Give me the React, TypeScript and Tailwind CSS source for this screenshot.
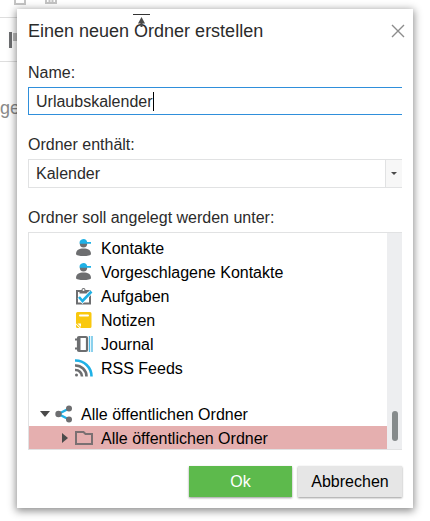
import { useState, ReactNode } from 'react'

interface Folder {
  id: string
  label: string
  icon: ReactNode
}

function ContactIcon() {
  return (
    <svg width="18" height="18" viewBox="0 0 18 18" aria-hidden="true">
      <circle cx="8.5" cy="4.7" r="3.7" fill="#6d6e70" />
      <path d="M4.8 4.7a3.7 3.7 0 0 1 7.2-1.8h4v1.8z" fill="#1fb1e6" />
      <path d="M1 15c0-4 3-5.6 7.5-5.6S16 11 16 15c0 2.7-15 2.7-15 0z" fill="#6d6e70" />
    </svg>
  )
}

function TaskIcon() {
  return (
    <svg width="18" height="18" viewBox="0 0 18 18" fill="none" aria-hidden="true">
      <path d="M2 4h13v12.500H2z" stroke="#6d6e70" strokeWidth="2" />
      <path d="M4.500 3h2a2 2 0 0 1 4 0h2v3.500h-8z" fill="#6d6e70" />
      <circle cx="8.500" cy="3" r="1" fill="#fff" />
      <path d="M4 10l3.500 4L16.500 4.500" stroke="#fff" strokeWidth="4" />
      <path d="M4 10l3.500 4L16.500 4.500" stroke="#1fb1e6" strokeWidth="2.600" />
    </svg>
  )
}

function NoteIcon() {
  return (
    <svg width="18" height="18" viewBox="0 0 18 18" aria-hidden="true">
      <path d="M2.500 1h12.500a1.500 1.500 0 0 1 1.500 1.500v13a1.500 1.500 0 0 1-1.500 1.500H6L1 12.500v-10A1.500 1.500 0 0 1 2.500 1z" fill="#f9c80e" />
      <path d="M5 4.500h8" stroke="#fff" strokeWidth="2" strokeLinecap="round" />
      <path d="M2.500 12.500H6V16z" fill="#fff" />
      <path d="M1 13.500L4.500 17H2.500A1.500 1.500 0 0 1 1 15.500z" fill="#f9c80e" />
    </svg>
  )
}

function JournalIcon() {
  return (
    <svg width="18" height="18" viewBox="0 0 18 18" fill="none" aria-hidden="true">
      <rect x="3" y="2" width="9" height="14" rx="1" stroke="#6d6e70" strokeWidth="2.200" />
      <path d="M4.500 2v14M0 4.500h3M0 13.500h3" stroke="#6d6e70" strokeWidth="2" />
      <path d="M14.500 1v16M17 1v16" stroke="#4fb9e4" strokeWidth="1.300" />
    </svg>
  )
}

function RssIcon() {
  return (
    <svg width="18" height="18" viewBox="0 0 18 18" fill="none" aria-hidden="true">
      <path d="M0 1.500A16 16 0 0 1 16.500 17.500" stroke="#1fb1e6" strokeWidth="2.600" />
      <path d="M0 6.500A11 11 0 0 1 11.500 17.500M0 11A6.500 6.500 0 0 1 7 17.500" stroke="#6d6e70" strokeWidth="2.600" />
      <circle cx="1.500" cy="16" r="1.500" fill="#6d6e70" />
    </svg>
  )
}

function ShareIcon() {
  return (
    <svg width="18" height="18" viewBox="0 0 18 18" aria-hidden="true">
      <path d="M14 3.500L3.500 9 14 14.500" fill="none" stroke="#1fb1e6" strokeWidth="2.400" />
      <circle cx="3.500" cy="9" r="3.200" fill="#6d6e70" />
      <circle cx="14" cy="3.500" r="3" fill="#6d6e70" />
      <circle cx="14" cy="14.500" r="3" fill="#6d6e70" />
    </svg>
  )
}

function FolderIcon() {
  return (
    <svg width="18" height="18" viewBox="0 0 18 18" fill="none" aria-hidden="true">
      <path d="M1 15V3h7.500L10.500 5H17v10z" stroke="#7a7072" strokeWidth="2" />
    </svg>
  )
}

const folders: Folder[] = [
  { id: 'contacts', label: 'Kontakte', icon: <ContactIcon /> },
  { id: 'suggested', label: 'Vorgeschlagene Kontakte', icon: <ContactIcon /> },
  { id: 'tasks', label: 'Aufgaben', icon: <TaskIcon /> },
  { id: 'notes', label: 'Notizen', icon: <NoteIcon /> },
  { id: 'journal', label: 'Journal', icon: <JournalIcon /> },
  { id: 'rss', label: 'RSS Feeds', icon: <RssIcon /> },
]

function MailPane() {
  return (
    <div className="absolute inset-x-0 top-0 w-1/2" aria-hidden="true">
      <div className="flex h-[18px] gap-[19px] border-b border-[#dedede] pl-[14px]">
        <svg width="12" height="5" viewBox="0 0 12 5" fill="none" stroke="#c4c4c4" strokeWidth="2">
          <path d="M1 0v4h10V0" />
        </svg>
        <svg width="12" height="4" viewBox="0 0 12 4" fill="none" stroke="#c4c4c4" strokeWidth="2">
          <path d="M1 0v3h10V0M4.500 0v3M7.500 0v3" />
        </svg>
      </div>
      <div className="flex h-11 items-center border-b border-[#dedede] pl-[9px]">
        <svg width="14" height="16" viewBox="0 0 14 16">
          <path d="M0 0h3v16H0z" fill="#6d6e70" />
          <path d="M4 1h10v8H4z" fill="#b9b9b9" />
        </svg>
      </div>
      <p className="pt-[34px] text-[18px] leading-6 text-[#8a8a8a]">gelesen</p>
    </div>
  )
}

export default function App() {
  const [name, setName] = useState('Urlaubskalender')
  const [type, setType] = useState('Kalender')
  const [selected, setSelected] = useState('public')

  return (
    <div className="relative min-h-screen bg-white px-[17px] pt-[9px] pb-3 font-['Liberation_Sans',Arial,sans-serif] text-base text-[#2b2b2b]">
      <MailPane />

      <form
        role="dialog"
        aria-labelledby="dialog-title"
        onSubmit={(e) => e.preventDefault()}
        className="relative bg-white px-[11px] pt-[10px] pb-[11px] shadow-[0_2px_8px_1px_rgba(0,0,0,0.45)]"
      >
        {/* drag handle */}
        <svg className="absolute top-[5px] left-[116px]" width="17" height="14" viewBox="0 0 17 14" aria-hidden="true">
          <path d="M0 .5h17" stroke="#333" />
          <path d="M8.500 3l3.500 6.500H5z" fill="#4a4a4a" />
          <path d="M8.500 9v4" stroke="#4a4a4a" strokeWidth="2" />
        </svg>

        <div className="flex h-6 items-center justify-between">
          <h1 id="dialog-title" className="text-[18px] leading-6">Einen neuen Ordner erstellen</h1>
          <button type="button" aria-label="Schließen" className="-mr-[7px] p-1">
            <svg width="14" height="14" viewBox="0 0 14 14" stroke="#8c8c8c" strokeWidth="1.400">
              <path d="M1 1l12 12M13 1L1 13" />
            </svg>
          </button>
        </div>

        <label htmlFor="name" className="mt-[18px] block leading-6">Name:</label>
        <div className="relative mt-[2px]">
          <input
            id="name"
            value={name}
            onChange={(e) => setName(e.target.value)}
            className="block h-7 w-full border border-r-0 border-[#2f8fdb] px-[7px] pt-[2px] caret-transparent outline-none"
          />
          <span className="absolute top-[5px] left-[125px] h-[19px] w-px bg-black" />
        </div>

        <label htmlFor="type" className="mt-[18px] block leading-6">Ordner enthält:</label>
        <div className="relative mt-[2px] flex h-[29px] border border-r-0 border-[#e1e2e3]">
          <select
            id="type"
            value={type}
            onChange={(e) => setType(e.target.value)}
            className="w-full appearance-none bg-transparent px-[7px] outline-none"
          >
            <option>Kalender</option>
            <option>Kontakte</option>
            <option>Aufgaben</option>
          </select>
          <span className="pointer-events-none flex w-[17px] shrink-0 items-center justify-center border-l border-[#e1e2e3] bg-[#f7f7f7]">
            <svg width="6" height="3" viewBox="0 0 6 3">
              <path d="M0 0h6L3 3z" fill="#4a4a4a" />
            </svg>
          </span>
        </div>

        <p id="tree-label" className="mt-[18px] leading-6">Ordner soll angelegt werden unter:</p>
        <div className="mt-[2px] flex border-y border-l border-[#e1e2e3] text-black">
          <ul role="tree" aria-labelledby="tree-label" className="min-w-0 flex-1 pt-[3px]">
            {folders.map((folder) => (
              <li
                key={folder.id}
                role="treeitem"
                aria-selected={selected === folder.id}
                onClick={() => setSelected(folder.id)}
                className="flex h-6 items-center gap-2 pl-[46px]"
              >
                {folder.icon}
                <span className="pt-[2px]">{folder.label}</span>
              </li>
            ))}
            <li role="treeitem" aria-expanded="true" aria-selected="false" className="mt-[22px] flex h-6 items-center pl-[11px]">
              <svg className="mr-[5px]" width="10" height="6" viewBox="0 0 10 6" aria-hidden="true">
                <path d="M0 0h10L5 6z" fill="#4a4a4a" />
              </svg>
              <span className="flex items-center gap-2">
                <ShareIcon />
                <span className="pt-[2px]">Alle öffentlichen Ordner</span>
              </span>
            </li>
            <li
              role="treeitem"
              aria-selected={selected === 'public'}
              onClick={() => setSelected('public')}
              className={`flex h-[23px] items-center pl-[33px] ${selected === 'public' ? 'bg-[#e5afaf]' : ''}`}
            >
              <svg className="mr-[7px]" width="6" height="10" viewBox="0 0 6 10" aria-hidden="true">
                <path d="M0 0v10l6-5z" fill="#4a4a4a" />
              </svg>
              <span className="flex items-center gap-2">
                <FolderIcon />
                <span className="pt-[2px]">Alle öffentlichen Ordner</span>
              </span>
            </li>
          </ul>
          <div className="flex w-[15px] flex-col items-center justify-end bg-[#edeef0] pb-2">
            <div className="h-[30px] w-[6px] rounded-full bg-[#868b8c]" />
          </div>
        </div>

        <div className="mt-4 flex justify-end gap-[6px]">
          <button type="submit" className="h-[31px] w-[103px] bg-[#5dba4c] text-white shadow-[0_1px_2px_rgba(0,0,0,0.4)]">
            Ok
          </button>
          <button type="button" className="h-[31px] w-[104px] bg-[#e6e6e6] text-black shadow-[0_1px_2px_rgba(0,0,0,0.4)]">
            Abbrechen
          </button>
        </div>
      </form>
    </div>
  )
}
